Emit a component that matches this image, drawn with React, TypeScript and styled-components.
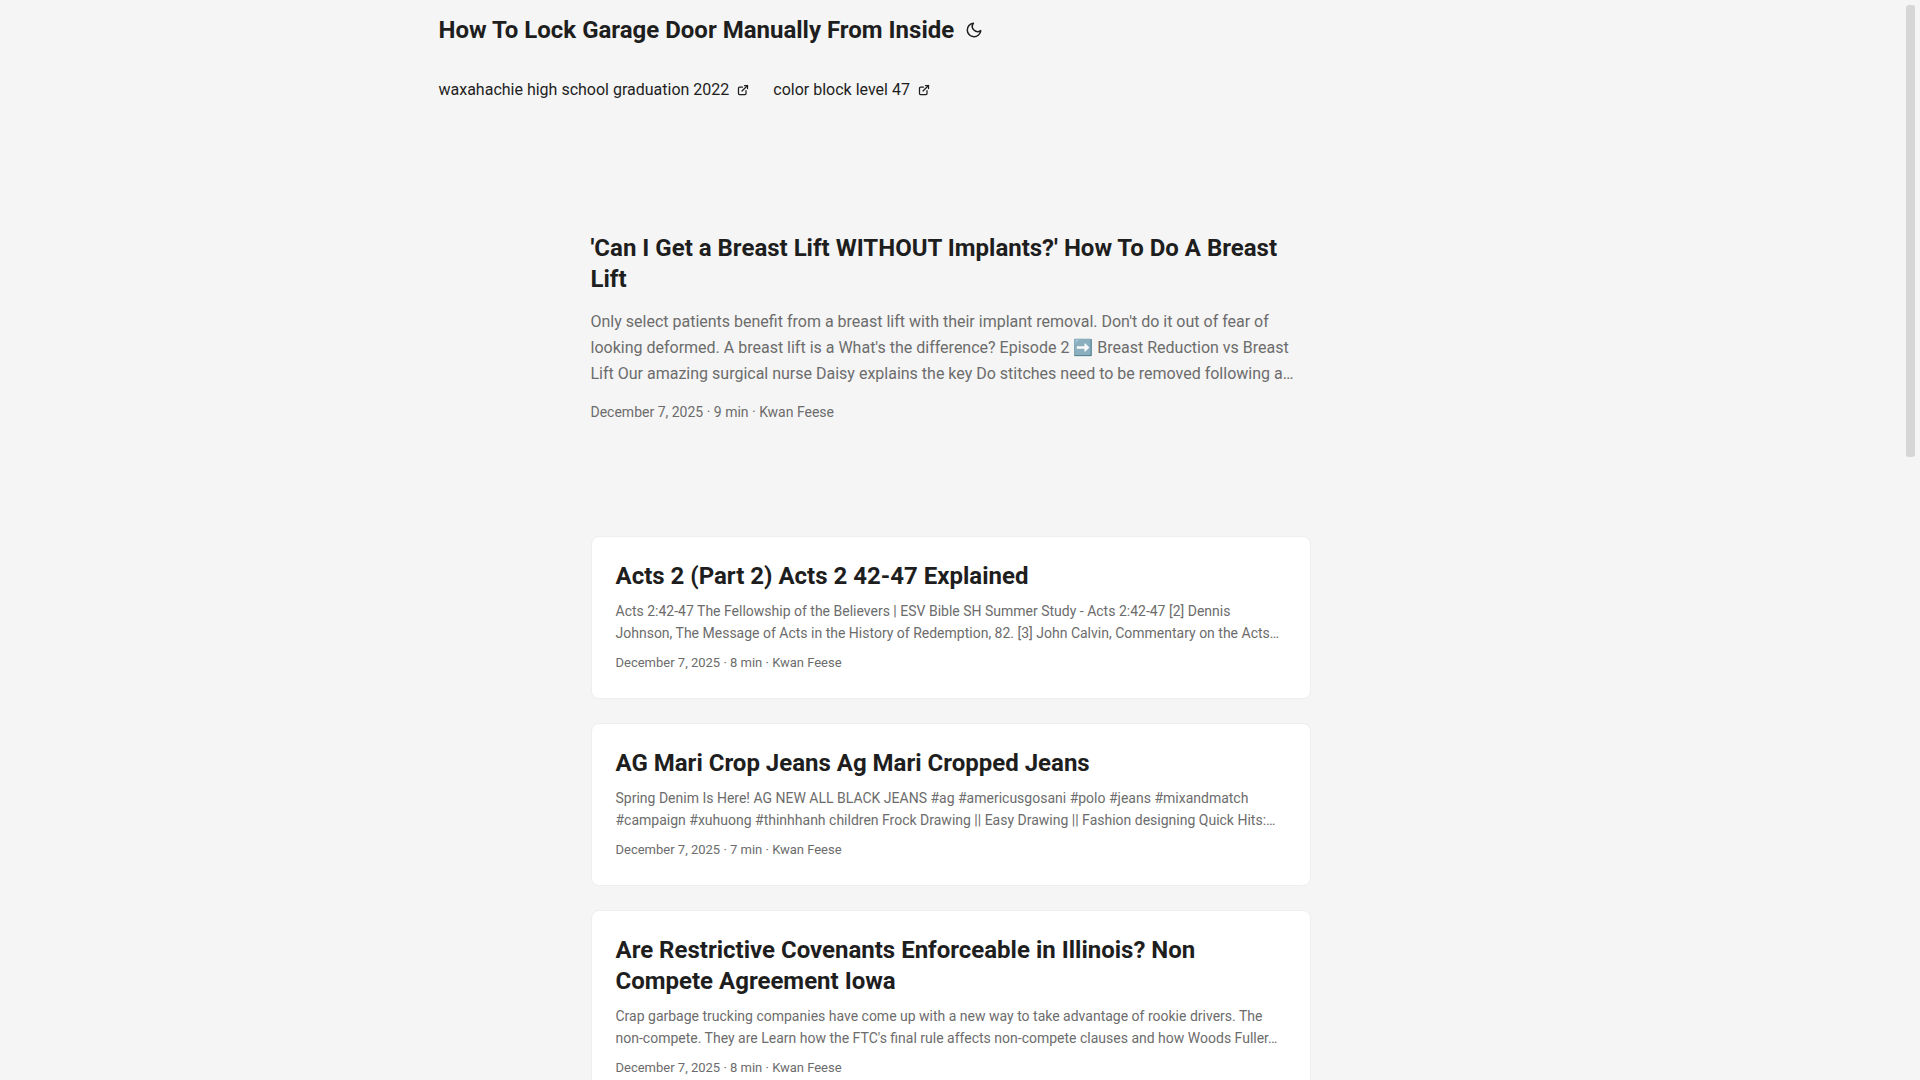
import React, { useEffect, useLayoutEffect, useRef, useState } from "react";
import styled, { createGlobalStyle } from "styled-components";

const color = {
  theme: "rgb(245, 245, 245)",
  entry: "rgb(255, 255, 255)",
  primary: "rgb(30, 30, 30)",
  secondary: "rgb(108, 108, 108)",
  tertiary: "rgb(214, 214, 214)",
  border: "rgb(238, 238, 238)",
};

const GlobalStyle = createGlobalStyle`
  *, *::before, *::after { box-sizing: border-box; }
  body {
    margin: 0;
    background: ${color.theme};
    color: ${color.primary};
    font-family: Roboto, "Open Sans", sans-serif;
    font-size: 18px;
    word-break: break-word;
  }
  h1, h2, p, ul { margin: 0; padding: 0; }
  a { color: inherit; text-decoration: none; }
`;

const Page = styled.div`
  display: grid;
  grid-template-columns: minmax(0, 1fr) 19px;
  height: 100vh;
  overflow: hidden;
`;

const Pane = styled.div`
  min-height: 0;
  overflow-y: auto;
  scrollbar-width: none;
`;

const Rail = styled.div`
  overflow: hidden;
  background: ${color.theme};
`;

const Thumb = styled.div`
  border: 5px solid ${color.theme};
  border-radius: 8px;
  background: ${color.tertiary};
`;

const Header = styled.header`
  max-width: 1072px;
  margin: 0 auto;
  padding: 0 24px;
  line-height: 60px;
`;

const Logo = styled.div`
  display: flex;
  align-items: center;
  font-size: 24px;
  font-weight: 700;
`;

const ThemeToggle = styled.button`
  display: flex;
  margin: 0 8px;
  padding: 0;
  border: 0;
  background: none;
  color: inherit;
  cursor: pointer;
`;

const Menu = styled.ul`
  display: flex;
  gap: 24px;
  list-style: none;
  font-size: 16px;
`;

const MenuLink = styled.a`
  display: flex;
  align-items: center;
  gap: 8px;
`;

const Main = styled.main`
  max-width: 768px;
  margin: 0 auto;
  padding: 24px 24px 1396px;
`;

const Entry = styled.article<{ $featured?: boolean }>`
  display: flex;
  flex-direction: column;
  justify-content: center;
  gap: ${(p) => (p.$featured ? "14px" : "8px")};
  min-height: ${(p) => (p.$featured ? "320px" : "0")};
  margin: ${(p) => (p.$featured ? "24px 0 48px" : "0 0 24px")};
  padding: ${(p) => (p.$featured ? "0" : "24px")};
  border: ${(p) => (p.$featured ? "0" : `1px solid ${color.border}`)};
  border-radius: 8px;
  background: ${(p) => (p.$featured ? "none" : color.entry)};
`;

const EntryTitle = styled.h2`
  font-size: 24px;
  font-weight: 700;
  line-height: 31px;
`;

const Summary = styled.p<{ $featured?: boolean }>`
  color: ${color.secondary};
  font-size: ${(p) => (p.$featured ? "16px" : "14px")};
  line-height: ${(p) => (p.$featured ? "26px" : "22px")};
`;

const Meta = styled.footer<{ $featured?: boolean }>`
  color: ${color.secondary};
  font-size: ${(p) => (p.$featured ? "14px" : "13px")};
  line-height: 22px;
`;

const MoonIcon = () => (
  <svg width="24" height="18" viewBox="0 0 24 24" fill="none" stroke="currentColor" strokeWidth="2" strokeLinecap="round" strokeLinejoin="round" aria-hidden="true">
    <path d="M21 12.79A9 9 0 1 1 11.21 3 7 7 0 0 0 21 12.79z" />
  </svg>
);

const ExternalIcon = () => (
  <svg width="12" height="12" viewBox="0 0 24 24" fill="none" stroke="currentColor" strokeWidth="2.5" strokeLinecap="round" strokeLinejoin="round" shapeRendering="geometricPrecision" aria-hidden="true">
    <path d="M18 13v6a2 2 0 01-2 2H5a2 2 0 01-2-2V8a2 2 0 012-2h6" />
    <path d="M15 3h6v6" />
    <path d="M10 14L21 3" />
  </svg>
);

const menu = ["waxahachie high school graduation 2022", "color block level 47"];

const posts = [
  {
    title: "'Can I Get a Breast Lift WITHOUT Implants?' How To Do A Breast Lift",
    summary:
      "Only select patients benefit from a breast lift with their implant removal. Don't do it out of fear of looking deformed. A breast lift is a What's the difference? Episode 2 ➡️ Breast Reduction vs Breast Lift Our amazing surgical nurse Daisy explains the key Do stitches need to be removed following a…",
    minutes: 9,
  },
  {
    title: "Acts 2 (Part 2) Acts 2 42-47 Explained",
    summary:
      "Acts 2:42-47 The Fellowship of the Believers | ESV Bible SH Summer Study - Acts 2:42-47 [2] Dennis Johnson, The Message of Acts in the History of Redemption, 82. [3] John Calvin, Commentary on the Acts…",
    minutes: 8,
  },
  {
    title: "AG Mari Crop Jeans Ag Mari Cropped Jeans",
    summary:
      "Spring Denim Is Here! AG NEW ALL BLACK JEANS #ag #americusgosani #polo #jeans #mixandmatch #campaign #xuhuong #thinhhanh children Frock Drawing || Easy Drawing || Fashion designing Quick Hits:…",
    minutes: 7,
  },
  {
    title: "Are Restrictive Covenants Enforceable in Illinois? Non Compete Agreement Iowa",
    summary:
      "Crap garbage trucking companies have come up with a new way to take advantage of rookie drivers. The non-compete. They are Learn how the FTC's final rule affects non-compete clauses and how Woods Fuller…",
    minutes: 8,
  },
];

export default function App() {
  const pane = useRef<HTMLDivElement>(null);
  const [thumb, setThumb] = useState({ height: 0, top: 0 });

  // Keeps the thumb in proportion to the visible part of the page.
  const measure = () => {
    const el = pane.current;
    if (!el) return;
    const ratio = el.clientHeight / el.scrollHeight;
    setThumb({
      height: Math.round(el.clientHeight * ratio),
      top: Math.round(el.scrollTop * ratio),
    });
  };

  useLayoutEffect(measure, []);
  useEffect(() => {
    window.addEventListener("resize", measure);
    return () => window.removeEventListener("resize", measure);
  }, []);

  return (
    <>
      <GlobalStyle />
      <Page>
        <Pane ref={pane} onScroll={measure}>
          <Header>
            <Logo>
              <a href="#">How To Lock Garage Door Manually From Inside</a>
              <ThemeToggle type="button">
                <MoonIcon />
              </ThemeToggle>
            </Logo>
            <nav>
              <Menu>
                {menu.map((label) => (
                  <li key={label}>
                    <MenuLink href="#">
                      {label}
                      <ExternalIcon />
                    </MenuLink>
                  </li>
                ))}
              </Menu>
            </nav>
          </Header>
          <Main>
            {posts.map((post, i) => (
              <Entry key={post.title} $featured={i === 0}>
                <EntryTitle as={i === 0 ? "h1" : "h2"}>
                  <a href="#">{post.title}</a>
                </EntryTitle>
                <Summary $featured={i === 0}>{post.summary}</Summary>
                <Meta $featured={i === 0}>
                  December 7, 2025 · {post.minutes} min · Kwan Feese
                </Meta>
              </Entry>
            ))}
          </Main>
        </Pane>
        <Rail aria-hidden="true">
          <Thumb style={{ height: thumb.height, marginTop: thumb.top }} />
        </Rail>
      </Page>
    </>
  );
}
